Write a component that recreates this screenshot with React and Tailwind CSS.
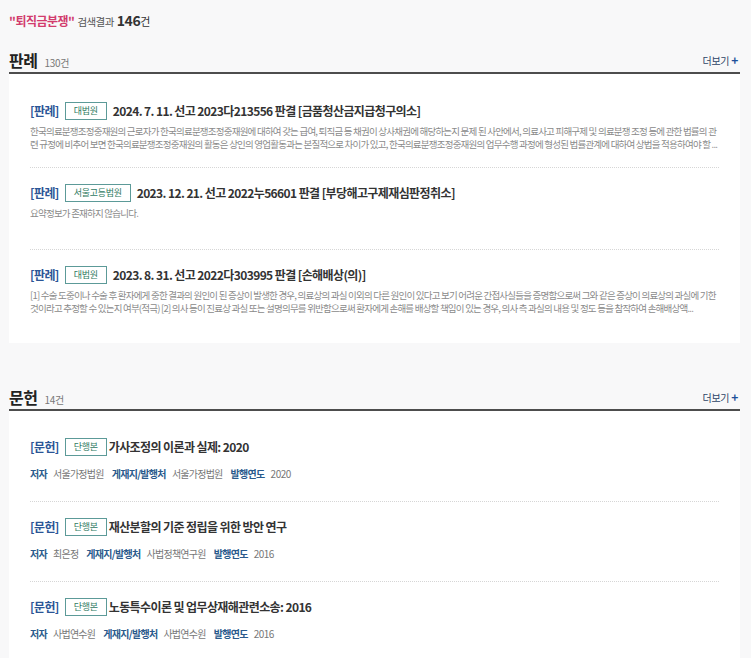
import React from "react";

const cases = [
  {
    court: "대법원",
    title: "2024. 7. 11. 선고 2023다213556 판결 [금품청산금지급청구의소]",
    desc: "한국의료분쟁조정중재원의 근로자가 한국의료분쟁조정중재원에 대하여 갖는 급여, 퇴직금 등 채권이 상사채권에 해당하는지 문제 된 사안에서, 의료사고 피해구제 및 의료분쟁 조정 등에 관한 법률의 관련 규정에 비추어 보면 한국의료분쟁조정중재원의 활동은 상인의 영업활동과는 본질적으로 차이가 있고, 한국의료분쟁조정중재원의 업무수행 과정에 형성된 법률관계에 대하여 상법을 적용하여야 할 ...",
  },
  {
    court: "서울고등법원",
    title: "2023. 12. 21. 선고 2022누56601 판결 [부당해고구제재심판정취소]",
    desc: "요약정보가 존재하지 않습니다.",
  },
  {
    court: "대법원",
    title: "2023. 8. 31. 선고 2022다303995 판결 [손해배상(의)]",
    desc: "[1] 수술 도중이나 수술 후 환자에게 중한 결과의 원인이 된 증상이 발생한 경우, 의료상의 과실 이외의 다른 원인이 있다고 보기 어려운 간접사실들을 증명함으로써 그와 같은 증상이 의료상의 과실에 기한 것이라고 추정할 수 있는지 여부(적극) [2] 의사 등이 진료상 과실 또는 설명의무를 위반함으로써 환자에게 손해를 배상할 책임이 있는 경우, 의사 측 과실의 내용 및 정도 등을 참작하여 손해배상액...",
  },
];

const docs = [
  { title: "가사조정의 이론과 실제: 2020", author: "서울가정법원", pub: "서울가정법원", year: "2020" },
  { title: "재산분할의 기준 정립을 위한 방안 연구", author: "최은정", pub: "사법정책연구원", year: "2016" },
  { title: "노동특수이론 및 업무상재해관련소송: 2016", author: "사법연수원", pub: "사법연수원", year: "2016" },
];

function Badge({ children }) {
  return (
    <span className="inline-flex h-[18px] items-center justify-center border border-[#5c9a98] bg-white px-[8px] text-[9px] tracking-[-0.3px] text-[#2f7a62] shrink-0">
      {children}
    </span>
  );
}

function SectionHeader({ title, count }) {
  return (
    <div className="flex h-[24px] items-center justify-between border-b-2 border-[#4d4d4d] box-content">
      <div className="flex items-baseline gap-[7px]">
        <span className="text-[16px] font-bold text-[#222] tracking-[-0.5px] leading-[22px]">{title}</span>
        <span className="text-[10px] text-[#777] tracking-[-0.3px]">{count}</span>
      </div>
      <span className="flex items-center gap-[2px] text-[10px] text-[#2d4466] tracking-[-0.3px] mr-[2px]">
        더보기
        <span className="font-bold text-[#1d4f9a] text-[12px] leading-none">+</span>
      </span>
    </div>
  );
}

export default function App() {
  return (
    <div className="min-h-[658px] bg-[#f8f8f9] pl-[9px] pr-[11px] pt-[10px] pb-[10px] font-['Noto_Sans_CJK_KR','Noto_Sans',sans-serif]">
      <div className="flex items-baseline h-[20px]">
        <span className="text-[12px] font-bold text-[#d23c6e] tracking-[-0.5px]">"퇴직금분쟁"</span>
        <span className="ml-[3px] text-[10.5px] text-[#555] tracking-[-0.6px]">검색결과</span>
        <span className="ml-[3px] text-[14px] font-bold text-[#333] tracking-[-0.4px]">146</span>
        <span className="text-[11px] text-[#333]">건</span>
      </div>

      <div className="mt-[18px]">
        <SectionHeader title="판례" count="130건" />
        <div className="bg-white px-[21px] py-[12px]">
          {cases.map((c, i) => (
            <div
              key={i}
              className={`pt-[15px] pb-[16px] ${i < cases.length - 1 ? "border-b border-dotted border-[#d6d6d6]" : ""}`}
            >
              <div className="flex h-[20px] items-center">
                <span className="text-[12px] font-bold text-[#2b5596] tracking-[-0.6px] mr-[6px]">[판례]</span>
                <Badge>{c.court}</Badge>
                <span className="ml-[6px] text-[12px] font-bold text-[#333] tracking-[-0.6px] whitespace-nowrap">{c.title}</span>
              </div>
              <p className="mt-[4px] min-h-[26px] text-[9.5px] leading-[13px] text-[#8a8a8a] tracking-[-0.78px] line-clamp-2 break-all">
                {c.desc}
              </p>
            </div>
          ))}
        </div>
      </div>

      <div className="mt-[42px]">
        <SectionHeader title="문헌" count="14건" />
        <div className="bg-white px-[21px] pt-[11px]">
          {docs.map((d, i) => (
            <div
              key={i}
              className={`pt-[15px] pb-[19px] ${i < docs.length - 1 ? "border-b border-dotted border-[#d6d6d6]" : ""}`}
            >
              <div className="flex h-[20px] items-center">
                <span className="text-[12px] font-bold text-[#2b5596] tracking-[-0.6px] mr-[6px]">[문헌]</span>
                <Badge>단행본</Badge>
                <span className="ml-[2px] text-[12px] font-bold text-[#333] tracking-[-0.6px]">{d.title}</span>
              </div>
              <div className="mt-[7px] flex h-[18px] items-center text-[10px]">
                <span className="font-bold text-[#2a5a8c] tracking-[-0.7px]">저자</span>
                <span className="ml-[6px] text-[#777] tracking-[-0.75px]">{d.author}</span>
                <span className="ml-[8px] font-bold text-[#2a5a8c] tracking-[-0.7px]">게재지/발행처</span>
                <span className="ml-[6px] text-[#777] tracking-[-0.75px]">{d.pub}</span>
                <span className="ml-[8px] font-bold text-[#2a5a8c] tracking-[-0.7px]">발행연도</span>
                <span className="ml-[6px] text-[#777] tracking-[-0.5px]">{d.year}</span>
              </div>
            </div>
          ))}
        </div>
      </div>
    </div>
  );
}
